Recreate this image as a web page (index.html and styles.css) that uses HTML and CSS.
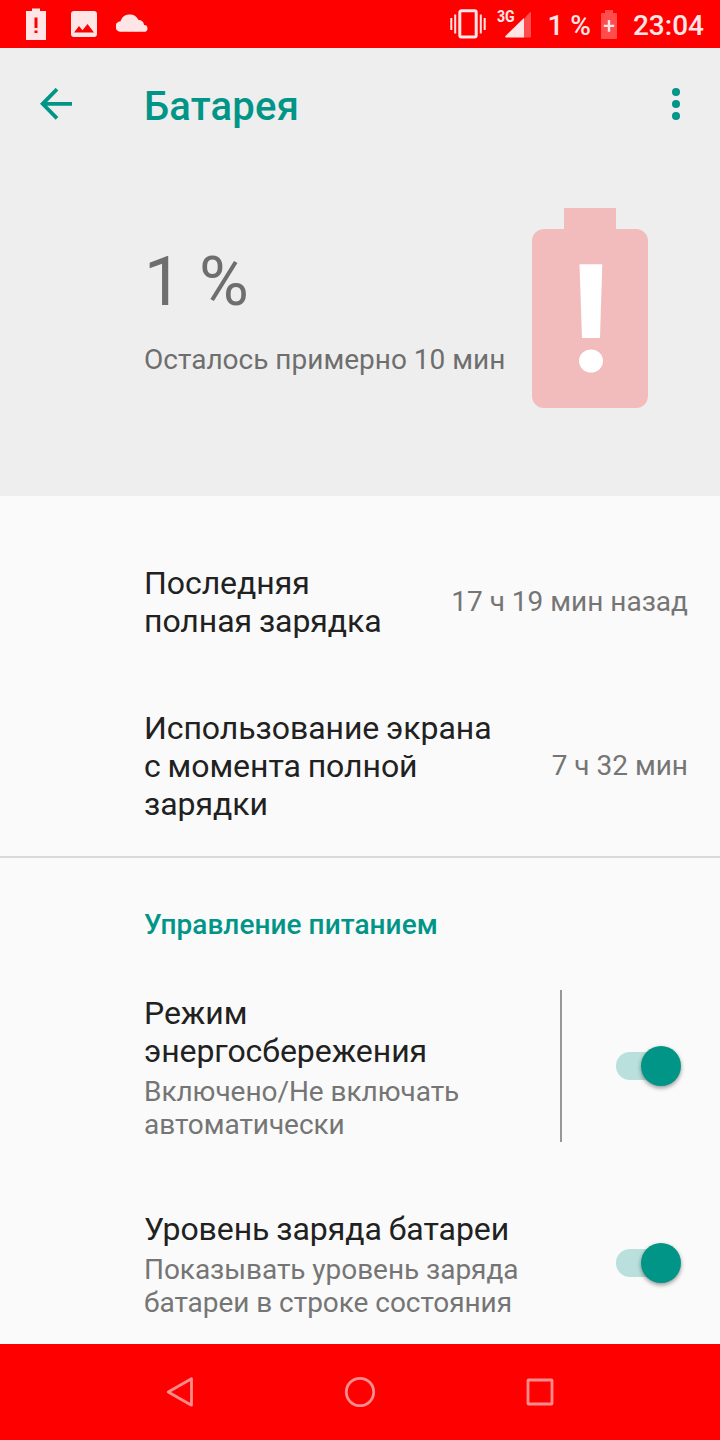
FILE: index.html
```
<!DOCTYPE html>
<html lang="ru">
<head>
    <meta charset="UTF-8">
    <meta name="viewport" content="width=device-width, initial-scale=1.0">
    <title>Батарея</title>
    <link rel="stylesheet" href="styles.css">
</head>
<body>
    <div class="status-bar">
        <div class="notifications">
            <svg width="20" height="32" viewBox="0 0 20 32">
                <path fill-rule="evenodd" d="M6 0.5h8V3h6v29H0V3h6zM8.500 9.500v10.500h3V9.500zM8.500 22.500v2.500h3v-2.500z"/>
            </svg>
            <svg class="photo" width="26" height="26" viewBox="0 0 26 26">
                <path fill-rule="evenodd" d="M3 0h20a3 3 0 0 1 3 3v20a3 3 0 0 1-3 3H3a3 3 0 0 1-3-3V3a3 3 0 0 1 3-3zM3 21.500h20L16.500 13l-5 6.200L8 15z"/>
            </svg>
            <svg class="cloud" width="32" height="22" viewBox="0 0 32 22">
                <path d="M5 18.800a5.300 5.300 0 0 1-0.500-10.600A9.500 9 0 0 1 22.300 6.800a6.200 6.200 0 0 1 5.800 5.200a3.400 3.400 0 0 1 0 6.800z"/>
            </svg>
        </div>
        <div class="system">
            <svg class="vibrate" width="36" height="32" viewBox="0 0 36 32">
                <rect x="9.800" y="2.800" width="16.400" height="26.200" rx="1.500" fill="none" stroke="#ffe5e5" stroke-width="3"/>
                <path d="M0.300 10h2v12h-2zM4.200 6.500h2v19h-2zM29.800 6.500h2v19h-2zM33.700 10h2v12h-2z"/>
            </svg>
            <div class="signal">
                <span class="network">3G</span>
                <svg width="26" height="26" viewBox="0 0 26 26">
                    <path class="faded" d="M19 7l5.500-6.500q1.500-1 1.500 0.500v23.500q0 1-1 1H19z"/>
                    <path d="M19 6v19.500H1q-1.500-0.200-0.500-1.500z"/>
                </svg>
            </div>
            <span class="percent">1 %</span>
            <svg class="charge" width="16" height="29" viewBox="0 0 16 29">
                <path class="faded" d="M4 0h8v3h3q1 0 1 1v24q0 1-1 1H1q-1 0-1-1V4q0-1 1-1h3z"/>
                <path d="M6.800 10h2.400v4.700h4v2.400h-4v4.700H6.800v-4.700h-4v-2.400h4z"/>
            </svg>
            <span class="clock">23:04</span>
        </div>
    </div>

    <div class="header">
        <svg class="back" width="32" height="32" viewBox="0 0 32 32">
            <path d="M17 1.200L2.600 15.800L17 30.400M3 15.800h29" fill="none" stroke="#009587" stroke-width="3.800"/>
        </svg>
        <h1>Батарея</h1>
        <svg class="more" width="8" height="32" viewBox="0 0 8 32">
            <circle cx="4" cy="4" r="4"/>
            <circle cx="4" cy="16" r="4"/>
            <circle cx="4" cy="28" r="4"/>
        </svg>
    </div>

    <div class="summary">
        <div class="charge-info">
            <div class="level">1 %</div>
            <div class="remaining">Осталось примерно 10 мин</div>
        </div>
        <svg class="battery" width="116" height="200" viewBox="0 0 116 200">
            <path d="M32 0h52v21h20a12 12 0 0 1 12 12v155a12 12 0 0 1-12 12H12a12 12 0 0 1-12-12V33a12 12 0 0 1 12-12h20z" fill="#f2bcbc"/>
            <path d="M47.500 56.300h22.800L68 130H50z" fill="#fff"/>
            <ellipse cx="59" cy="153" rx="12" ry="11.500" fill="#fff"/>
        </svg>
    </div>

    <div class="content">
        <div class="row">
            <div class="title">Последняя<br>полная зарядка</div>
            <div class="value">17 ч 19 мин назад</div>
        </div>
        <div class="row usage">
            <div class="title">Использование экрана<br>с момента полной<br>зарядки</div>
            <div class="value">7 ч 32 мин</div>
        </div>

        <div class="category">Управление питанием</div>

        <div class="setting">
            <div class="text">
                <div class="title">Режим<br>энергосбережения</div>
                <div class="subtext">Включено/Не включать<br>автоматически</div>
            </div>
            <div class="divider"></div>
            <div class="switch"><div class="thumb"></div></div>
        </div>
        <div class="setting level-setting">
            <div class="text">
                <div class="title">Уровень заряда батареи</div>
                <div class="subtext">Показывать уровень заряда<br>батареи в строке состояния</div>
            </div>
            <div class="switch"><div class="thumb"></div></div>
        </div>
    </div>

    <div class="nav-bar">
        <svg width="32" height="32" viewBox="0 0 32 32">
            <path d="M27.500 2.800v26.400L4.200 16z"/>
        </svg>
        <svg width="32" height="32" viewBox="0 0 32 32">
            <circle cx="16" cy="16" r="13.700"/>
        </svg>
        <svg width="32" height="32" viewBox="0 0 32 32">
            <rect x="4" y="4" width="24" height="24" rx="0.500"/>
        </svg>
    </div>
</body>
</html>
```

FILE: styles.css
```
* {
    box-sizing: border-box;
}

body {
    margin: 0;
    width: 720px;
    height: 1440px;
    display: flex;
    flex-direction: column;
    overflow: hidden;
    background: #fafafa;
    color: #212121;
    font-family: Roboto, sans-serif;
}

svg {
    display: block;
    flex-shrink: 0;
}

/* Status bar */
.status-bar {
    height: 48px;
    display: flex;
    justify-content: space-between;
    padding: 0 16px 0 26px;
    background: #ff0000;
    color: #ffe5e5;
    fill: #ffe5e5;
    font-size: 28px;
    font-weight: 500;
}

.notifications,
.system {
    display: flex;
    align-items: center;
}

.photo {
    margin-left: 25px;
}

.cloud {
    margin-left: 19px;
}

.faded {
    fill: #ff4d4d;
}

.signal {
    display: flex;
    align-items: flex-start;
    margin-left: 11px;
}

.signal svg {
    margin: 1px 0 0 -13px;
}

.network {
    font-size: 17px;
    line-height: 11px;
    font-weight: 700;
    transform: scaleX(0.83);
    transform-origin: left;
}

.percent {
    margin-left: 16px;
    padding-top: 2px;
}

.charge {
    margin-left: 10px;
}

.clock {
    margin-left: 16px;
    padding-top: 2px;
}

/* Header */
.header {
    height: 112px;
    display: flex;
    align-items: center;
    padding: 0 40px;
    background: #eeeeee;
    color: #009587;
}

h1 {
    flex: 1;
    margin: 6px 0 0 72px;
    font-size: 40px;
    line-height: 48px;
    font-weight: 500;
    letter-spacing: 0.2px;
}

.more {
    fill: #009587;
}

/* Battery summary */
.summary {
    height: 336px;
    display: flex;
    justify-content: space-between;
    padding: 48px 72px 0 144px;
    background: #eeeeee;
    color: #6e6e6e;
}

.level {
    margin-top: 32px;
    font-size: 68px;
    line-height: 84px;
}

.remaining {
    margin-top: 19px;
    font-size: 28px;
    line-height: 33px;
    white-space: nowrap;
}

/* List */
.content {
    flex: 1;
    min-height: 0;
    padding-top: 36px;
}

.row {
    display: flex;
    align-items: center;
    justify-content: space-between;
    padding: 32px 32px 32px 144px;
}

.usage {
    margin-top: 5px;
    padding-bottom: 33px;
    border-bottom: 2px solid #dadada;
}

.title {
    font-size: 32px;
    line-height: 38px;
    letter-spacing: -0.06px;
    word-spacing: -1px;
    white-space: nowrap;
}

.value,
.subtext {
    color: #757575;
    font-size: 28px;
    line-height: 33px;
    white-space: nowrap;
}

.value {
    padding-bottom: 2px;
}

.category {
    margin: 50px 0 0 144px;
    color: #009587;
    font-size: 28px;
    line-height: 33px;
    font-weight: 500;
    letter-spacing: 0.05px;
}

.setting {
    display: flex;
    align-items: center;
    margin-top: 49px;
    padding: 0 40px 0 144px;
}

.level-setting {
    margin-top: 65px;
}

.text {
    flex: 1;
    padding-top: 3px;
}

.subtext {
    margin-top: 5px;
    letter-spacing: -0.05px;
}

.divider {
    width: 2px;
    height: 152px;
    margin-right: 54px;
    background: #979797;
}

.switch {
    width: 64px;
    height: 28px;
    display: flex;
    align-items: center;
    justify-content: flex-end;
    border-radius: 14px;
    background: #b9e0dc;
}

.thumb {
    width: 40px;
    height: 40px;
    flex-shrink: 0;
    margin-right: -1px;
    border-radius: 50%;
    background: #009587;
    box-shadow: 0 2px 4px rgba(0, 0, 0, 0.4);
}

/* Navigation bar */
.nav-bar {
    height: 96px;
    display: flex;
    align-items: center;
    justify-content: center;
    gap: 148px;
    background: #ff0000;
    fill: none;
    stroke: #ff8c8c;
    stroke-width: 2.8;
    stroke-linejoin: round;
}
```
